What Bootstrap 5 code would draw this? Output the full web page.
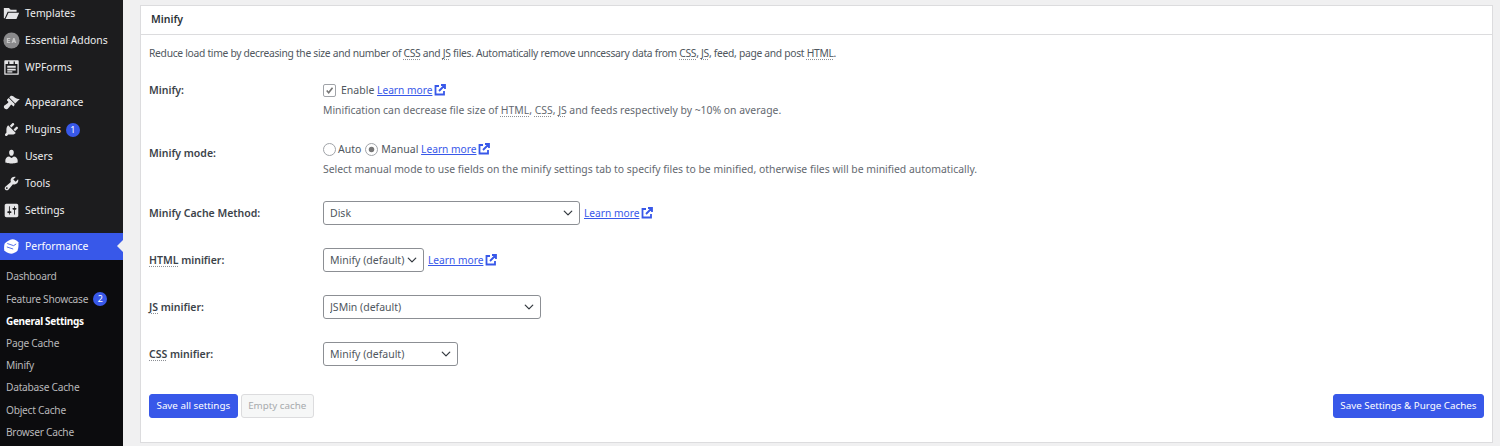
<!DOCTYPE html>
<html lang="en"><head><meta charset="utf-8"><title>Minify</title>
<link href="https://cdn.jsdelivr.net/npm/bootstrap@5.3.0/dist/css/bootstrap.min.css" rel="stylesheet">
<style>
html,body{height:446px;overflow:hidden;background:#f0f0f1}
body{font-family:"Noto Sans","Open Sans",sans-serif;font-size:10.5px;color:#50575e}
.wp-side{width:123px;height:446px;background:#1c1c1e;color:#f0f0f1;flex:none;overflow:hidden}
.wp-item{height:27px;padding-left:25px;font-size:10.4px;color:#eeeeee;position:relative}
.wp-item svg{position:absolute;left:3px;top:5px;width:17px;height:17px;fill:#e4e4e6}
.wp-gap{height:8px}
.wp-cur{background:#3858e9;color:#fff;height:27px;margin-top:9px}
.wp-cur::after{content:"";position:absolute;right:0;top:7px;border:6.5px solid transparent;border-right-color:#f0f0f1;border-left-width:0}
.wp-sub{background:#0c0c0e;padding-top:6px;height:190px}
.wp-sub div{height:22.2px;padding-left:6px;color:#b8b8ba;font-size:10.2px;letter-spacing:-.25px}
.wp-sub .wp-now{color:#fff;font-weight:700;font-size:10px;letter-spacing:-.3px}
.wp-count{width:14px;height:14px;border-radius:50%;background:#3858e9;color:#fff;font-size:9px;margin-left:5px;line-height:14px;letter-spacing:0}
.wp-main{padding:5px 7px 3px 17px;min-width:0}
.wp-panel{background:#fff;border:1px solid #dcdcde;height:438px}
.wp-head{height:29px;border-bottom:1px solid #dcdcde;padding-left:10px;font-size:10.5px;font-weight:600;color:#2c3338}
.wp-intro{margin:0;padding:10px 0 0 8px;line-height:17px;height:47px;color:#50575e;font-size:10.3px;letter-spacing:-.3px}
.wp-row{padding-left:8px}
.wp-lab{width:174px;flex:none;font-weight:600;color:#3c434a}
.wp-help{line-height:17px;margin-top:3px;color:#646970;font-size:10.4px}
.wp-line{line-height:17px}
.r1{height:59px}.r2{height:60px}.r3,.r4,.r5,.r6{height:47px}
.wp-link{color:#3858e9;text-decoration:underline;font-size:10.2px}
.wp-link svg{width:12px;height:12px;margin-left:2px;vertical-align:-2px;fill:none;stroke:#3858e9;stroke-width:1.8}
abbr.wp-ab{text-decoration:underline dotted #8c8f94;text-underline-offset:2px}
.wp-select.form-select{height:24px;min-height:0;padding:0 18px 0 6px;font-size:10.5px;color:#50575e;border:1px solid #8c8f94;border-radius:3px;background-position:right 5px center;background-size:12px 10px;line-height:22px}
.w-a{width:257px}.w-b{width:101px}.w-c{width:218px}.w-d{width:135px}
.wp-check.form-check-input{width:13px;height:13px;margin:0 5px 0 0;border:1px solid #a0a3a8;background-color:#fff;--bs-form-check-bg:#fff;flex:none}
.wp-check.form-check-input:checked[type=checkbox]{background-color:#fff;border-color:#a0a3a8;border-radius:2px;background-image:url("data:image/svg+xml,%3csvg xmlns='http://www.w3.org/2000/svg' viewBox='0 0 20 20'%3e%3cpath fill='none' stroke='%23777' stroke-width='3' d='m5 10 3.500 4 7-9'/%3e%3c/svg%3e")}
.wp-check.form-check-input:checked[type=radio]{background-color:#fff;border-color:#a0a3a8;background-image:url("data:image/svg+xml,%3csvg xmlns='http://www.w3.org/2000/svg' viewBox='-4 -4 8 8'%3e%3ccircle r='2' fill='%23777'/%3e%3c/svg%3e")}
.wp-btn.btn{height:24px;padding:0 6.500px;font-size:9.8px;line-height:22px;border-radius:3px;--bs-btn-bg:#3858e9;--bs-btn-border-color:#3858e9;--bs-btn-color:#fff}
.wp-btn2.btn{height:24px;padding:0 6.500px;font-size:9.8px;line-height:22px;border-radius:3px;background:#f6f7f7;border:1px solid #dcdcde;color:#a7aaad;opacity:1}
.wp-foot{padding:0 8px;margin-top:5px}
.wp-pair{gap:3px}
</style></head>
<body>
<div class="d-flex">
<nav class="wp-side">
 <div class="wp-item d-flex align-items-center"><svg viewBox="0 0 20 20"><path d="M1 3.500h6l2 2h7v2.500H5.500L2 15.500H1z"/><path d="M6.500 9H19l-3.200 7.500H3z"/></svg>Templates</div>
 <div class="wp-item d-flex align-items-center"><svg viewBox="0 0 20 20"><circle cx="10" cy="10" r="9.500" fill="#8a8a8c"/><path d="M4.500 7H8.500v1.200H6v1.200H8.100v1.200H6v1.200H8.500V13H4.500zM12 7h1.600l2 6H14l-.3-1h-2l-.3 1h-1.400z" fill="#c8c8c8"/></svg>Essential Addons</div>
 <div class="wp-item d-flex align-items-center"><svg viewBox="0 0 20 20"><path fill-rule="evenodd" d="M2.500 1.500h15a1 1 0 0 1 1 1v15a1 1 0 0 1-1 1h-15a1 1 0 0 1-1-1v-15a1 1 0 0 1 1-1zM3 6v11h14V6h-3V3h-1.500v3h-5V3H6v3zM5 8h10v2.200H5zm0 3.500h10v2H5zm0 3h6V16H5z"/></svg>WPForms</div>
 <div class="wp-gap"></div>
 <div class="wp-item d-flex align-items-center"><svg viewBox="0 0 20 20"><path d="M14.480 11.060 7.410 3.990l1.500-1.500c.5-.56 2.300-.47 3.510.32 1.210.8 1.430 1.280 2.910 2.100 1.180.64 2.450 1.260 4.450.85z"/><path d="M13.770 11.770 6.700 4.700 4.930 6.470c-.39.39-.39 1.020 0 1.410l1.060 1.060c.39.39.39 1.030 0 1.420-.6.6-1.430 1.110-2.210 1.690-.35.26-.7.53-1.010.84C1.430 13.250 1 14.400 1 15.200c0 .6.25 1.200.9 1.900.7.65 1.300.9 1.900.9.8 0 1.950-.43 2.800-1.770.31-.31.58-.66.84-1.010.58-.78 1.090-1.610 1.690-2.210.39-.39 1.030-.39 1.420 0l1.060 1.060c.39.39 1.020.39 1.410 0z"/></svg>Appearance</div>
 <div class="wp-item d-flex align-items-center"><svg viewBox="0 0 20 20"><path d="M13.110 4.360 9.870 7.600 8 5.730l3.240-3.240c.35-.34 1.050-.2 1.560.32.52.51.66 1.210.31 1.550zm-8 1.770.91-1.120 9.010 9.010-1.190.84c-.71.71-2.630 1.160-3.820 1.160H6.140L4.900 17.260c-.59.59-1.540.59-2.120 0-.59-.58-.59-1.530 0-2.120l1.240-1.240v-3.880c0-1.130.4-3.190 1.090-3.890zm7.260 3.970 3.240-3.240c.34-.35 1.040-.21 1.550.31.52.51.66 1.210.31 1.550l-3.240 3.250z"/></svg>Plugins<span class="wp-count d-inline-flex justify-content-center">1</span></div>
 <div class="wp-item d-flex align-items-center"><svg viewBox="0 0 20 20"><path d="M10 9.250c-2.270 0-2.730-3.440-2.730-3.440C7 4.020 7.820 2 9.970 2c2.160 0 2.980 2.020 2.710 3.810 0 0-.41 3.440-2.680 3.440zm0 2.570L12.720 10c2.390 0 4.520 2.330 4.520 4.530v2.490s-3.650 1.130-7.240 1.130c-3.650 0-7.240-1.130-7.240-1.130v-2.490c0-2.250 1.940-4.480 4.470-4.480z"/></svg>Users</div>
 <div class="wp-item d-flex align-items-center"><svg viewBox="0 0 20 20"><path d="M16.680 9.770c-1.340 1.340-3.300 1.670-4.950.99l-5.410 6.520c-.99.99-2.590.99-3.580 0s-.99-2.590 0-3.570l6.520-5.420c-.68-1.650-.35-3.610.99-4.950 1.280-1.280 3.120-1.620 4.720-1.060l-2.890 2.890 2.820 2.820 2.860-2.870c.53 1.580.18 3.390-1.080 4.650zM3.810 16.210c.4.39 1.040.39 1.430 0 .4-.4.4-1.040 0-1.430-.39-.4-1.030-.4-1.430 0-.39.39-.39 1.030 0 1.430z"/></svg>Tools</div>
 <div class="wp-item d-flex align-items-center"><svg viewBox="0 0 20 20"><path d="M18 16V4c0-1.100-.9-2-2-2H4c-1.100 0-2 .9-2 2v12c0 1.100.9 2 2 2h12c1.100 0 2-.9 2-2zM8 11h1c.55 0 1 .45 1 1s-.45 1-1 1H8v1.500c0 .28-.22.5-.5.5s-.5-.22-.5-.5V13H6c-.55 0-1-.45-1-1s.45-1 1-1h1V5.500c0-.28.22-.5.5-.5s.5.22.5.5V11zm5-2h-1c-.55 0-1-.45-1-1s.45-1 1-1h1V5.500c0-.28.22-.5.5-.5s.5.22.5.5V7h1c.55 0 1 .45 1 1s-.45 1-1 1h-1v5.500c0 .28-.22.5-.5.5s-.5-.22-.5-.5V9z"/></svg>Settings</div>
 <div class="wp-item wp-cur d-flex align-items-center"><svg viewBox="0 0 20 20" style="fill:#fff"><path d="M11 1.500c3 .3 6 1.800 7 3.500.6 3 .2 7-1 10-2 2-5 3.500-7.500 3.500C6 18 3 16.500 1.500 14.500c-.5-2.500-.2-6 .5-8C4.500 4 8 2 11 1.500z"/><path d="M5 6.500l7.500 2.500 3-2M4.500 10.500l7.500 2.500" stroke="#3858e9" fill="none"/></svg>Performance</div>
 <div class="wp-sub">
  <div class="d-flex align-items-center">Dashboard</div>
  <div class="d-flex align-items-center">Feature Showcase<span class="wp-count d-inline-flex justify-content-center">2</span></div>
  <div class="d-flex align-items-center wp-now">General Settings</div>
  <div class="d-flex align-items-center">Page Cache</div>
  <div class="d-flex align-items-center">Minify</div>
  <div class="d-flex align-items-center">Database Cache</div>
  <div class="d-flex align-items-center">Object Cache</div>
  <div class="d-flex align-items-center">Browser Cache</div>
 </div>
</nav>
<main class="wp-main flex-grow-1">
 <section class="wp-panel">
  <div class="wp-head d-flex align-items-center">Minify</div>
  <p class="wp-intro">Reduce load time by decreasing the size and number of <abbr class="wp-ab">CSS</abbr> and <abbr class="wp-ab">JS</abbr> files. Automatically remove unncessary data from <abbr class="wp-ab">CSS</abbr>, <abbr class="wp-ab">JS</abbr>, feed, page and post <abbr class="wp-ab">HTML</abbr>.</p>
  <div class="wp-row d-flex r1">
   <div class="wp-lab wp-line">Minify:</div>
   <div>
    <div class="d-flex align-items-center wp-line"><input class="form-check-input wp-check" type="checkbox" checked aria-label="Enable"><span>Enable&nbsp;<a class="wp-link" href="#">Learn more<svg viewBox="0 0 12 12"><path d="M5 2H1.500v8.500H10V7M7 1h4v4M11 1 5 7"/></svg></a></span></div>
    <div class="wp-help">Minification can decrease file size of <abbr class="wp-ab">HTML</abbr>, <abbr class="wp-ab">CSS</abbr>, <abbr class="wp-ab">JS</abbr> and feeds respectively by ~10% on average.</div>
   </div>
  </div>
  <div class="wp-row d-flex r2">
   <div class="wp-lab wp-line pt-1">Minify mode:</div>
   <div>
    <div class="d-flex align-items-center wp-line"><input class="form-check-input wp-check" type="radio" name="m" aria-label="Auto" style="margin-right:2px"><span>Auto</span><input class="form-check-input wp-check ms-1" type="radio" name="m" checked aria-label="Manual" style="margin-right:3px"><span>Manual&nbsp;<a class="wp-link" href="#">Learn more<svg viewBox="0 0 12 12"><path d="M5 2H1.500v8.500H10V7M7 1h4v4M11 1 5 7"/></svg></a></span></div>
    <div class="wp-help">Select manual mode to use fields on the minify settings tab to specify files to be minified, otherwise files will be minified automatically.</div>
   </div>
  </div>
  <div class="wp-row d-flex r3">
   <div class="wp-lab wp-line pt-1">Minify Cache Method:</div>
   <div class="d-flex align-items-start"><select class="form-select wp-select w-a" aria-label="Minify Cache Method"><option>Disk</option></select><a class="wp-link ms-1 wp-line pt-1" href="#">Learn more<svg viewBox="0 0 12 12"><path d="M5 2H1.500v8.500H10V7M7 1h4v4M11 1 5 7"/></svg></a></div>
  </div>
  <div class="wp-row d-flex r4">
   <div class="wp-lab wp-line pt-1"><abbr class="wp-ab">HTML</abbr> minifier:</div>
   <div class="d-flex align-items-start"><select class="form-select wp-select w-b" aria-label="HTML minifier"><option>Minify (default)</option></select><a class="wp-link ms-1 wp-line pt-1" href="#">Learn more<svg viewBox="0 0 12 12"><path d="M5 2H1.500v8.500H10V7M7 1h4v4M11 1 5 7"/></svg></a></div>
  </div>
  <div class="wp-row d-flex r5">
   <div class="wp-lab wp-line pt-1"><abbr class="wp-ab">JS</abbr> minifier:</div>
   <div><select class="form-select wp-select w-c" aria-label="JS minifier"><option>JSMin (default)</option></select></div>
  </div>
  <div class="wp-row d-flex r6">
   <div class="wp-lab wp-line pt-1"><abbr class="wp-ab">CSS</abbr> minifier:</div>
   <div><select class="form-select wp-select w-d" aria-label="CSS minifier"><option>Minify (default)</option></select></div>
  </div>
  <div class="wp-foot d-flex justify-content-between">
   <div class="d-flex wp-pair"><button class="btn wp-btn" type="button">Save all settings</button><button class="btn wp-btn2" type="button" disabled>Empty cache</button></div>
   <button class="btn wp-btn" type="button">Save Settings &amp; Purge Caches</button>
  </div>
 </section>
</main>
</div>
<script src="https://cdn.jsdelivr.net/npm/bootstrap@5.3.0/dist/js/bootstrap.bundle.min.js"></script>
</body></html>
